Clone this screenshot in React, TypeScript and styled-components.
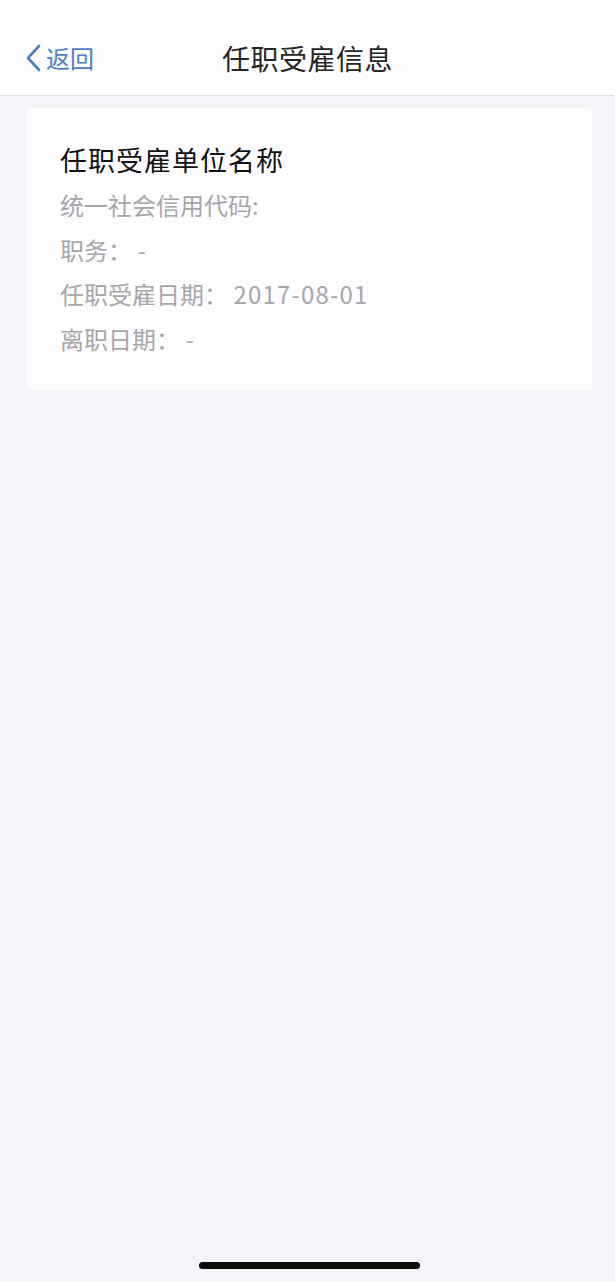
import React from "react";
import styled, { createGlobalStyle } from "styled-components";

const Global = createGlobalStyle`
  html, body { margin: 0; padding: 0; background: #f4f5f9; }
  body { font-family: "Noto Sans CJK SC", "Noto Sans", sans-serif; }
  * { box-sizing: border-box; }
`;

const Page = styled.div`
  position: relative;
  min-height: 1282px;
  background: #f4f5f9;
`;

const Header = styled.header`
  height: 96px;
  padding-top: 20px;
  background: #fdfdfd;
  border-bottom: 1px solid #e3e4e8;
  display: grid;
  grid-template-columns: 1fr auto 1fr;
  align-items: center;
`;

const Back = styled.div`
  display: flex;
  align-items: center;
  gap: 5px;
  padding-left: 25px;
  color: #4f7fc3;
  font-size: 24px;
  line-height: 1;
`;

const Title = styled.h1`
  margin: 0;
  font-size: 28px;
  font-weight: 400;
  color: #262626;
  letter-spacing: 0.5px;
`;

const Card = styled.section`
  margin: 12px 23px 0 27px;
  background: #fdfdfd;
  border-radius: 4px;
  padding: 28px 32px 29px 33px;
`;

const CardTitle = styled.div`
  font-size: 27px;
  line-height: 47px;
  color: #111;
  letter-spacing: 1px;
`;

const Row = styled.div`
  font-size: 24px;
  line-height: 44.5px;
  color: #a6a6ab;
`;

const Value = styled.span`
  letter-spacing: 1.2px;
`;

const HomeBar = styled.div`
  position: absolute;
  left: 199px;
  bottom: 13px;
  width: 221px;
  height: 7px;
  border-radius: 4px;
  background: #0a0a0a;
`;

export default function App() {
  return (
    <Page>
      <Global />
      <Header>
        <Back>
          <svg width="16" height="28" viewBox="0 0 16 28" fill="none">
            <path d="M14 2 L3 14 L14 26" stroke="#4f7fc3" strokeWidth="2.6" strokeLinecap="round" strokeLinejoin="round" />
          </svg>
          <span>返回</span>
        </Back>
        <Title>任职受雇信息</Title>
        <div />
      </Header>
      <Card>
        <CardTitle>任职受雇单位名称</CardTitle>
        <Row>统一社会信用代码:</Row>
        <Row>职务： <Value>-</Value></Row>
        <Row>任职受雇日期： <Value>2017-08-01</Value></Row>
        <Row>离职日期： <Value>-</Value></Row>
      </Card>
      <HomeBar />
    </Page>
  );
}
